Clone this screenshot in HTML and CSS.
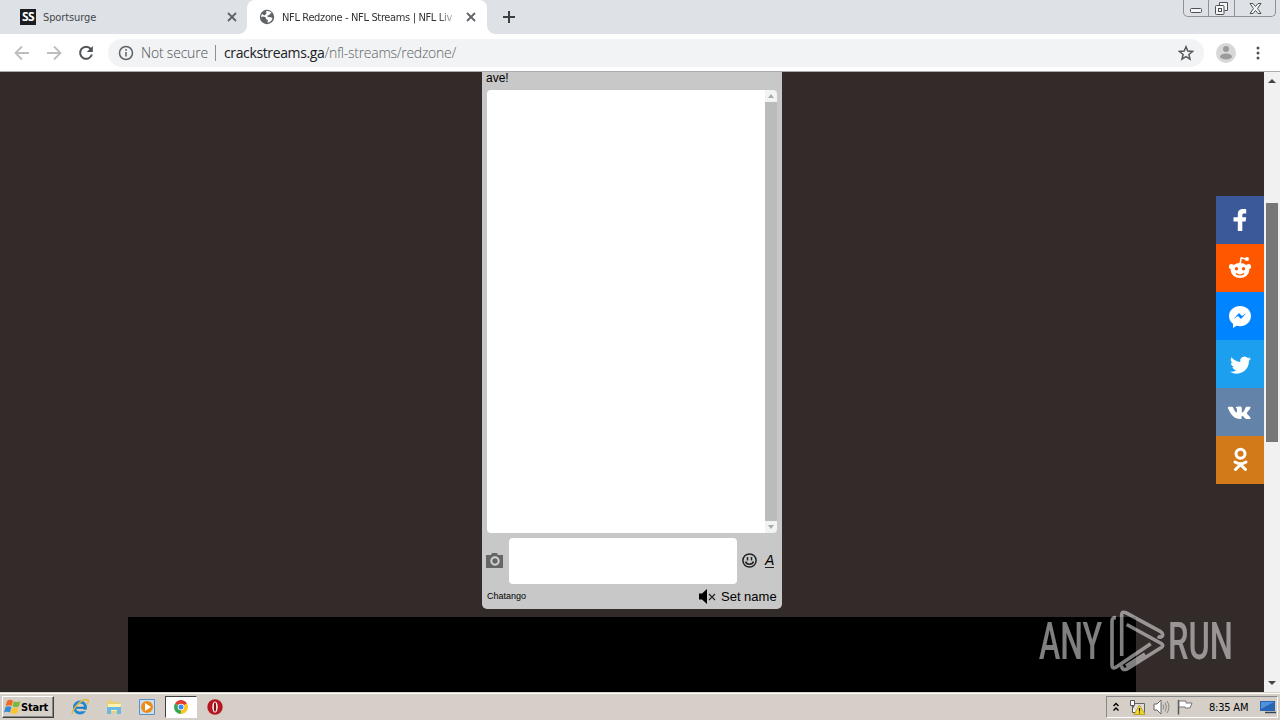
FILE: index.html
```
<!DOCTYPE html>
<html lang="en">
<head>
	<meta charset="utf-8">
	<title>NFL Redzone - NFL Streams | NFL Live</title>
	<link rel="stylesheet" href="styles.css">
</head>
<body>
	<div class="tabs">
		<div class="tab first">
			<span class="ss">SS</span>
			<span class="title">Sportsurge</span>
			<svg class="close" width="10" height="10" viewBox="0 0 10 10"><path d="M1 1l8 8M9 1l-8 8"/></svg>
		</div>
		<div class="tab active">
			<svg class="globe" width="16" height="16" viewBox="0 0 16 16"><circle cx="8" cy="8" r="7.2" fill="#5f6368"/><path fill="#fff" d="M7 2.200c2.500-.5 4.500.3 5.800 2L11 4.500 10.500 6 8.500 6.500 8.700 8l3.300.3 1.500 1c-.6 2.500-2.500 4.200-5 4.400L8.800 11 7 10 6.500 8 3.500 7.500 2.200 8.500C2 7 2.400 5.800 3 5l2.500 1.500L7.500 4.500z"/></svg>
			<span class="title">NFL Redzone - NFL Streams | NFL Liv</span>
			<svg class="close" width="10" height="10" viewBox="0 0 10 10"><path d="M1 1l8 8M9 1l-8 8"/></svg>
		</div>
		<svg class="plus" width="12" height="12" viewBox="0 0 12 12"><path d="M6 0v12M0 6h12"/></svg>
		<div class="winbtns">
			<span class="wb min"><svg width="13" height="5"><rect x=".5" y=".5" width="11" height="4" rx="1"/></svg></span>
			<span class="wb max"><svg width="13" height="13"><path d="M4.500 3V.5h8v8H9.500"/><rect x=".5" y="3.500" width="8.500" height="9" rx="1"/><rect x="3.500" y="6.500" width="3" height="3"/></svg></span>
			<span class="wb x"><svg width="13" height="11"><path d="M1 .5h3l2.500 3 2.500-3h3L8.500 5.500l3.500 5H9L6.500 7.500 4 10.500H1l3.500-5z"/></svg></span>
		</div>
	</div>

	<div class="toolbar">
		<svg class="nav" width="16" height="16" viewBox="0 0 16 16"><path d="M15 8H2M8 1.500L1.500 8 8 14.500"/></svg>
		<svg class="nav" width="16" height="16" viewBox="0 0 16 16"><path d="M1 8h13M8 1.500L14.500 8 8 14.500"/></svg>
		<svg class="nav reload" width="16" height="16" viewBox="0 0 16 16"><path d="M12.800 4A6 6 0 1 0 13.900 9.500"/><path class="head" d="M14.800 1v6h-6z"/></svg>
		<div class="omnibox">
			<svg class="info" width="16" height="16" viewBox="0 0 16 16"><circle cx="8" cy="8" r="6.500"/><path d="M8 7v4.500M8 4v1.700"/></svg>
			<span class="secure">Not secure</span>
			<span class="bar"></span>
			<span class="url"><b>crackstreams.ga</b>/nfl-streams/redzone/</span>
			<svg class="star" width="16" height="16" viewBox="0 0 16 16"><path d="M8 1.800l1.800 4.300 4.700.4-3.600 3 1.100 4.600-4-2.500-4 2.500 1.100-4.600-3.600-3 4.700-.4z"/></svg>
		</div>
		<svg class="avatar" width="20" height="20" viewBox="0 0 20 20"><circle cx="10" cy="10" r="10" fill="#d7d7d7"/><circle cx="10" cy="6" r="3" fill="#9b9b9b"/><ellipse cx="10" cy="13.500" rx="6" ry="3" fill="#9b9b9b"/></svg>
		<svg class="dots" width="4" height="14" viewBox="0 0 4 14"><circle cx="2" cy="2" r="1.500"/><circle cx="2" cy="7" r="1.500"/><circle cx="2" cy="12" r="1.500"/></svg>
	</div>

	<div class="view">
		<div class="page">
			<div class="chat">
				<div class="notice">ave!</div>
				<div class="messages">
					<div class="chatbar">
						<span class="cap"><svg width="6" height="4"><path d="M3 0l3 4H0z"/></svg></span>
						<span class="cap"><svg width="6" height="4"><path d="M0 0h6L3 4z"/></svg></span>
					</div>
				</div>
				<div class="compose">
					<svg class="camera" width="17" height="15" viewBox="0 0 17 15"><path d="M0 2h5l1-2h5l1 2h5v13H0z" fill="#666"/><circle cx="9" cy="8" r="3.700" fill="none" stroke="#d5d5d5" stroke-width="2"/></svg>
					<div class="entry"></div>
					<svg class="smile" width="15" height="15" viewBox="0 0 15 15"><circle cx="7.500" cy="7.500" r="6.600"/><path d="M5.500 4v3.500M9.500 4v3.500M3.500 8.500c1 3.500 7 3.500 8 0"/></svg>
					<span class="style">A</span>
				</div>
				<div class="foot">
					<span class="brand">Chatango</span>
					<svg class="mute" width="17" height="15" viewBox="0 0 17 15"><path d="M0 4.500h3L8 0v15l-5-4.500H0z"/><path d="M10 5l6 6M16 5l-6 6" stroke="#222" stroke-width="1.200"/></svg>
					<span class="setname">Set name</span>
				</div>
			</div>
			<div class="player"></div>
		</div>
		<div class="scroll">
			<svg width="8" height="4"><path d="M4 0l4 4H0z"/></svg>
			<div class="thumb"></div>
			<svg width="8" height="4"><path d="M0 0h8L4 4z"/></svg>
		</div>

		<div class="share">
			<a class="fb"><svg width="32" height="32" viewBox="0 0 32 32"><path fill="#fff" d="M18.300 27V17.500h3.300l.6-4.200h-3.900v-2.100c0-1.200.6-1.700 1.900-1.700h2V5.200c-.5-.1-1.500-.2-2.900-.2-3.500 0-5.500 1.800-5.500 5.100v3.200H9.500v4.200h4.300V27z"/></svg></a>
			<a class="reddit"><svg width="32" height="32" viewBox="0 0 32 32"><path fill="none" stroke="#fff" stroke-width="1.500" d="M16 12l1.200-6 5 1"/><circle cx="23" cy="7" r="2" fill="#fff"/><circle cx="7.500" cy="14.500" r="2.600" fill="#fff"/><circle cx="24.500" cy="14.500" r="2.600" fill="#fff"/><ellipse cx="16" cy="18.500" rx="9.300" ry="7.500" fill="#fff"/><circle cx="12.500" cy="16.700" r="1.700" fill="#ff5700"/><circle cx="19.500" cy="16.700" r="1.700" fill="#ff5700"/><path d="M12 21.500c2 2 6 2 8 0" fill="none" stroke="#ff5700" stroke-width="1.200"/></svg></a>
			<a class="messenger"><svg width="32" height="32" viewBox="0 0 32 32"><path fill="#fff" d="M16 6C9.900 6 5 10.400 5 16c0 3.200 1.500 6 4 7.800V28l3.600-2.200c1.100.3 2.200.4 3.400.4 6.100 0 11-4.500 11-10.200S22.100 6 16 6z"/><path fill="#0084ff" d="M9.500 19l5.500-6 3 3 4.500-3-5.500 6-3-3z"/></svg></a>
			<a class="twitter"><svg width="32" height="32" viewBox="0 0 32 32"><path fill="#fff" transform="translate(2.500 3) scale(.88)" d="M28 8.600a10 10 0 0 1-2.800.8 5 5 0 0 0 2.100-2.700c-1 .6-2 1-3.100 1.200a4.900 4.900 0 0 0-8.400 4.500A14 14 0 0 1 5.700 7.200a4.900 4.900 0 0 0 1.500 6.600c-.8 0-1.600-.2-2.200-.6v.1c0 2.400 1.700 4.400 3.900 4.800a5 5 0 0 1-2.200.1 4.900 4.900 0 0 0 4.600 3.400A9.900 9.900 0 0 1 4 23.600 14 14 0 0 0 25.500 11.200c1-.7 1.800-1.600 2.500-2.600z"/></svg></a>
			<a class="vk"><svg width="32" height="32" viewBox="0 0 32 32"><path fill="#fff" transform="translate(.7 1) scale(.93)" d="M4.500 10.500H8c.5 0 .8.300 1 .8 1 2.600 2.500 5 3.600 5.500.6 0 .6-1.500.6-3 0-1.400-.4-1.900-1.500-2.200.6-1.300 2.300-1.300 4.300-1.300 2.200 0 2.400.7 2.400 2 0 2-.3 4.200.6 4.400 1.200-.4 2.500-3 3.500-5.400.2-.5.500-.8 1-.8h3.400c1 0 1 .6.700 1.300-.8 2-3.900 5-3.900 5.700 0 .8 3.300 3 4.100 5 .2.700-.2 1.100-1 1.100h-3.500c-1 0-1.400-.7-2.300-1.600-.8-.9-1.600-1.500-2.200-1.500-.6 0-.6.600-.6 1.500 0 1.200-.5 1.600-1.500 1.600-6.400 0-9.600-3.600-13.200-11.500-.2-.8 0-1.600 1-1.600z"/></svg></a>
			<a class="ok"><svg width="32" height="32" viewBox="0 0 32 32"><g fill="none" stroke="#fff" stroke-width="3" stroke-linecap="round"><circle cx="16.500" cy="9.800" r="4.500"/><path d="M11 18c3.400 2.200 7.600 2.200 11 0M16.500 20.500l-5 5M16.500 20.500l5 5"/></g></svg></a>
		</div>

		<svg class="anyrun" width="200" height="64" viewBox="0 0 200 64">
			<text x="1" y="50" textLength="63" lengthAdjust="spacingAndGlyphs">ANY</text>
			<text x="130" y="50" textLength="65" lengthAdjust="spacingAndGlyphs">RUN</text>
			<g fill="none" stroke="#fff" stroke-width="3.600" stroke-linejoin="round">
				<path d="M78 8.700q-4-.5-4 3.500v44q0 4 4 2l34.700-23.500"/>
				<path d="M83.700 47V6q0-4 4-2.300l35 19q3 2 1.500 4.500-1.500 2-4.500 0"/>
				<path d="M88.700 15.500l34.600 19q3 2 0 4L89 60q-5 2-5.500-3.500"/>
				<path d="M88 57l19-12"/>
			</g>
		</svg>
	</div>

	<div class="taskbar">
		<div class="start">
			<svg width="17" height="16" viewBox="0 0 17 16"><path fill="#ef6a26" d="M3 2c2-1.500 4-1.500 6-.2L7.600 7C6 6 4 6 1.700 7.200z"/><path fill="#7db73c" d="M9.800 2.200c2 1 4 1 6.500-.2L15 7.300c-2.300 1.200-4.500 1.100-6.500 0z"/><path fill="#3a8ad2" d="M1.400 8.200c2-1.200 4-1.200 6-.1L6 13.500c-2-1.200-4-1.100-6 .1z"/><path fill="#fbc52c" d="M8.200 8.500c2 1 4.200 1 6.400 0l-1.300 5.400c-2.300 1.200-4.500 1.100-6.500 0z"/></svg>
			<b>Start</b>
		</div>
		<div class="apps">
			<span class="app"><svg width="18" height="18" viewBox="0 0 18 18"><circle cx="9" cy="9.500" r="5.500" fill="none" stroke="#2289d0" stroke-width="3"/><path d="M5 9.800h9" stroke="#1c78bd" stroke-width="2"/><path d="M11 12.500h6" stroke="#d5cfc7" stroke-width="1.500"/><path d="M1.500 16C0 13 11-1 17 2c1 .7 0 3-1 4" fill="none" stroke="#e3b93a" stroke-width="1.500"/></svg></span>
			<span class="app"><svg width="18" height="18" viewBox="0 0 18 18"><path fill="#e9cf74" d="M2 3l5-1 1 2h7v11H2z"/><path fill="#fff1b0" d="M3 6h13l-1 7H3z"/><path fill="#69b9e4" d="M2 9h14v7h-4v-4H6v4H2z"/></svg></span>
			<span class="app"><svg width="18" height="18" viewBox="0 0 18 18"><path fill="#c6e1f7" stroke="#5b91c5" d="M1.500 1.500h15v15h-15z"/><circle cx="9" cy="9" r="6" fill="#f18b16"/><path fill="#fff" d="M7 5l6 4-6 4z"/></svg></span>
			<span class="app on"><svg width="14" height="14" viewBox="0 0 14 14"><path fill="#e23c30" d="M7 7L1 3.500a7 7 0 0 1 12 0z"/><path fill="#38a452" d="M7 7l-.1 7A7 7 0 0 1 1 3.500z"/><path fill="#fbc719" d="M7 7l6-3.500A7 7 0 0 1 6.900 14z"/><circle cx="7" cy="7" r="3.300" fill="#fff"/><circle cx="7" cy="7" r="2.500" fill="#4285f4"/></svg></span>
			<span class="app"><svg width="16" height="16" viewBox="0 0 16 16"><circle cx="8" cy="8" r="7.700" fill="#b5161f"/><ellipse cx="8" cy="8" rx="2.700" ry="5.500" fill="#fff"/><ellipse cx="8" cy="8" rx="1.200" ry="4.800" fill="#8c1018"/></svg></span>
		</div>
		<div class="tray">
			<svg width="6" height="10" viewBox="0 0 6 10"><path d="M.5 4L3 1.500 5.500 4M.5 8.500L3 6l2.500 2.500" fill="none" stroke="#000" stroke-width="1.400"/></svg>
			<svg class="net" width="17" height="17" viewBox="0 0 17 17"><path d="M4.500 4.500h11v9h-11z" fill="#ddd" stroke="#666"/><path d="M1.500 1.500h4v5h-4zM3.500 6.500v7h3" fill="#fff" stroke="#555"/><path d="M10.500 6L16 15.500H5z" fill="#f3d82d" stroke="#ad9200" stroke-width=".7"/><path d="M10.500 9v3.500M10.500 13.500v1" stroke="#222" stroke-width="1.200"/></svg>
			<svg class="vol" width="17" height="16" viewBox="0 0 17 16"><path d="M1 5h3l4-4v14l-4-4H1z" fill="#fff" stroke="#666"/><path d="M10 5.500q1.500 2.500 0 5M12 3.500q3 4.500 0 9M14 2q4 6 0 12" fill="none" stroke="#888"/></svg>
			<svg class="flag" width="17" height="16" viewBox="0 0 17 16"><path d="M1.500 1v14.500" stroke="#555" stroke-width="1.500"/><path d="M2 2h7v2h6l-2 5H8V8H2z" fill="#fff" stroke="#777"/></svg>
			<span class="clock">8:35 AM</span>
			<svg class="desk" width="16" height="13" viewBox="0 0 16 13"><path d="M0 0h15v10H0z" fill="#2865b5"/><path d="M1 1h13L1 8z" fill="#4f91dc"/><path d="M5 11.500h11" stroke="#345" stroke-width="1.500"/></svg>
		</div>
	</div>
</body>
</html>
```
FILE: styles.css
```
body{
	margin: 0;
	width: 1280px;
	height: 720px;
	overflow: hidden;
	display: flex;
	flex-direction: column;
	font-family: "DejaVu Sans Condensed", "DejaVu Sans", sans-serif;
	font-size: 11px;
}

svg{
	flex: none;
	display: block;
}

/* tab strip */
.tabs{
	height: 34px;
	background: #dee1e6;
	display: flex;
	align-items: center;
	position: relative;
}
.tab{
	box-sizing: border-box;
	height: 34px;
	display: flex;
	align-items: center;
	color: #45484d;
}
.tab.first{
	width: 247px;
	padding: 0 10px 0 20px;
}
.tab.active{
	width: 240px;
	padding: 0 11px 0 12px;
	background: #fff;
	border-radius: 8px 8px 0 0;
	color: #333;
	position: relative;
}
.tab.active:before, .tab.active:after{
	content: "";
	position: absolute;
	bottom: 0;
	width: 8px;
	height: 8px;
}
.tab.active:before{
	left: -8px;
	background: radial-gradient(circle at 0 0, transparent 7.5px, #fff 8px);
}
.tab.active:after{
	right: -8px;
	background: radial-gradient(circle at 100% 0, transparent 7.5px, #fff 8px);
}
.ss{
	width: 16px;
	height: 16px;
	line-height: 16px;
	background: #1b1d20;
	color: #fff;
	font-family: "Open Sans", sans-serif;
	font-size: 12px;
	font-weight: bold;
	text-align: center;
	letter-spacing: -0.5px;
}
.title{
	flex: 1;
	margin-left: 7px;
	white-space: nowrap;
	letter-spacing: -0.1px;
}
.active .title{
	flex: none;
	width: 176px;
	margin-right: 8px;
	letter-spacing: -0.35px;
	-webkit-mask-image: linear-gradient(to right, #000 156px, transparent 178px);
	mask-image: linear-gradient(to right, #000 156px, transparent 178px);
}
.close{
	stroke: #5f6368;
	stroke-width: 1.8;
}
.plus{
	margin-left: 16px;
	stroke: #3c4043;
	stroke-width: 2;
}
.winbtns{
	box-sizing: border-box;
	display: flex;
	width: 93px;
	height: 17px;
	margin: 0 4px 0 auto;
	align-self: flex-start;
	border: 1px solid #8d929b;
	border-top: 0;
	border-radius: 0 0 5px 5px;
}
.wb{
	display: flex;
	align-items: center;
	justify-content: center;
}
.wb svg{
	fill: #f5f5f5;
	stroke: #4d5157;
}
.min{
	width: 24px;
	padding-top: 4px;
}
.max{
	width: 25px;
	border-left: 1px solid #8d929b;
	border-right: 1px solid #8d929b;
}
.x{
	flex: 1;
}

/* toolbar */
.toolbar{
	box-sizing: border-box;
	height: 38px;
	background: #fff;
	border-bottom: 1px solid #a9abae;
	display: flex;
	align-items: center;
	padding-left: 14px;
}
.nav{
	margin-right: 16px;
	fill: none;
	stroke: #bbbdbf;
	stroke-width: 1.8;
}
.reload{
	margin-right: 14px;
	stroke: #505358;
	stroke-width: 2;
}
.reload .head{
	fill: #505358;
	stroke: none;
}
.omnibox{
	box-sizing: border-box;
	width: 1096px;
	height: 28px;
	border-radius: 14px;
	background: #f1f3f4;
	display: flex;
	align-items: center;
	padding: 0 10px 0 10px;
	font-family: "Open Sans", sans-serif;
	font-size: 14px;
	font-weight: 300;
	color: #4d5156;
	white-space: nowrap;
}
.info{
	fill: none;
	stroke: #5f6368;
	stroke-width: 1.5;
}
.secure{
	width: 67px;
	margin-left: 7px;
	letter-spacing: -0.2px;
}
.bar{
	width: 1px;
	height: 16px;
	background: #8c9095;
	margin: 0 8px 0 7px;
}
.url{
	flex: 1;
	color: #5f6469;
	letter-spacing: -0.27px;
}
.url b{
	font-weight: 400;
	color: #202124;
	letter-spacing: -0.37px;
}
.star{
	fill: none;
	stroke: #55595e;
	stroke-width: 1.5;
}
.avatar{
	margin-left: 12px;
}
.dots{
	margin-left: 20px;
	fill: #505358;
}

/* web page */
.view{
	height: 620px;
	display: flex;
	position: relative;
}
.page{
	width: 1264px;
	background: #332b2a;
	display: flex;
	flex-direction: column;
}
.chat{
	box-sizing: border-box;
	width: 300px;
	height: 537px;
	margin-left: 482px;
	padding: 0 5px;
	background: #c8c8c8;
	border-radius: 0 0 5px 5px;
	font-family: "Liberation Sans", Arial, sans-serif;
	color: #000;
}
.notice{
	height: 18px;
	margin-left: -1px;
	line-height: 12px;
	font-size: 12px;
}
.messages{
	height: 443px;
	background: #fff;
	border-radius: 4px;
	overflow: hidden;
	display: flex;
	justify-content: flex-end;
}
.chatbar{
	width: 12px;
	background: #bbb;
	display: flex;
	flex-direction: column;
	justify-content: space-between;
}
.cap{
	height: 12px;
	background: #f3f3f3;
	display: flex;
	align-items: center;
	justify-content: center;
}
.cap path{
	fill: #aaa;
}
.compose{
	display: flex;
	align-items: center;
	margin-top: 5px;
}
.camera{
	margin: 0 6px 2px -1px;
}
.entry{
	width: 228px;
	height: 46px;
	border-radius: 4px;
	background: #fff;
}
.smile{
	margin: 0 8px 1px 5px;
	fill: none;
	stroke: #222;
	stroke-width: 1.5;
}
.style{
	font-size: 14px;
	line-height: 13px;
	font-style: italic;
	border-bottom: 1px solid #222;
}
.foot{
	height: 24px;
	display: flex;
	align-items: center;
}
.brand{
	font-size: 9px;
	flex: 1;
}
.mute{
	margin-right: 5px;
}
.setname{
	font-size: 13px;
	width: 56px;
	white-space: nowrap;
}
.player{
	width: 1008px;
	flex: 1;
	margin: 8px 0 0 128px;
	background: #000;
}
.scroll{
	box-sizing: border-box;
	width: 16px;
	background: #f1f1f1;
	display: flex;
	flex-direction: column;
	align-items: center;
	padding: 7px 0;
}
.scroll svg{
	fill: #444;
}
.thumb{
	width: 12px;
	height: 239px;
	margin: 120px 0 auto;
	background: #777;
}

/* floating share buttons */
.share{
	position: absolute;
	top: 124px;
	right: 16px;
}
.share a{
	width: 48px;
	height: 48px;
	display: flex;
	align-items: center;
	justify-content: center;
}
.fb{ background: #3b5998; }
.reddit{ background: #ff5700; }
.messenger{ background: #0084ff; }
.twitter{ background: #1d9ff0; }
.vk{ background: #6383a8; }
.ok{ background: #d27a1a; }

.anyrun{
	position: absolute;
	left: 1038px;
	top: 537px;
	opacity: 0.5;
}
.anyrun text{
	font-family: "Roboto", sans-serif;
	font-size: 52px;
	font-weight: 500;
	fill: #fff;
}

/* taskbar */
.taskbar{
	box-sizing: border-box;
	height: 28px;
	background: #d5cfc7;
	border-top: 1px solid #d5cfc7;
	box-shadow: inset 0 1px #fff;
	display: flex;
	align-items: center;
	padding: 1px 2px 0 2px;
}
.start{
	box-sizing: border-box;
	width: 52px;
	height: 22px;
	display: flex;
	align-items: center;
	padding-left: 1px;
	border: 1px solid;
	border-color: #fff #404040 #404040 #fff;
	box-shadow: inset -1px -1px #888;
}
.start b{
	letter-spacing: -0.2px;
}
.apps{
	display: flex;
	margin-left: 9px;
}
.app{
	width: 33.700px;
	height: 22px;
	display: flex;
	align-items: center;
	justify-content: center;
}
.app.on{
	box-sizing: border-box;
	width: 32px;
	margin: 0 1px;
	background: #fff;
	border: 1px solid;
	border-color: #404040 #fff #fff #404040;
}
.tray{
	box-sizing: border-box;
	width: 172px;
	height: 22px;
	margin-left: auto;
	padding-left: 6px;
	display: flex;
	align-items: center;
	border: 1px solid;
	border-color: #888 #fff #fff #888;
}
.net{
	margin-left: 10px;
}
.vol{
	margin-left: 7px;
}
.flag{
	margin-left: 7px;
}
.clock{
	width: 42px;
	margin-left: 15px;
	white-space: nowrap;
	letter-spacing: -0.2px;
}
.desk{
	margin-left: 9px;
}
```
